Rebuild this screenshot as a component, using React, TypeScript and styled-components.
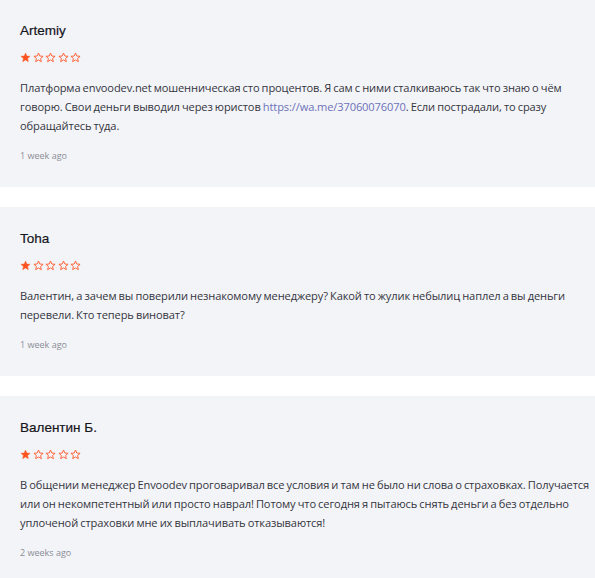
import { FC } from "react";
import styled, { createGlobalStyle } from "styled-components";

const GlobalStyle = createGlobalStyle`
  html, body {
    margin: 0;
    padding: 0;
    background: #ffffff;
  }
  * {
    box-sizing: border-box;
  }
`;

const List = styled.div`
  display: flex;
  flex-direction: column;
  gap: 20px;
  margin-top: -1px;
`;

const CardRoot = styled.div`
  background: #f3f4f8;
  padding: 24px 0 24px 20px;
  display: flex;
  flex-direction: column;
`;

const Name = styled.div`
  font-family: "Liberation Sans", Arial, sans-serif;
  font-size: 13.5px;
  font-weight: 400;
  -webkit-text-stroke: 0.2px #15151c;
  color: #15151c;
  line-height: 16px;
`;

const Stars = styled.div`
  display: flex;
  gap: 1.5px;
  margin-top: 13px;
  height: 12px;
`;

const Body = styled.p`
  margin: 14px 0 0;
  font-family: "Open Sans", "Noto Sans", sans-serif;
  font-size: 11.1px;
  line-height: 19px;
  color: #33353d;
  letter-spacing: -0.12px;
  word-spacing: -0.6px;
`;

const Link = styled.a`
  color: #6d72b8;
  text-decoration: none;
`;

const Time = styled.div`
  margin-top: 14px;
  font-family: "Open Sans", "Noto Sans", sans-serif;
  font-size: 9px;
  line-height: 14px;
  color: #8a8c94;
`;

const Star: FC<{ filled?: boolean }> = ({ filled }) => (
  <svg width="11" height="11" viewBox="0 0 24 24">
    <path
      d="M12 2.2l2.9 6.6 7.1.6-5.4 4.7 1.6 7-6.2-3.7-6.2 3.7 1.6-7L2 9.4l7.1-.6z"
      fill={filled ? "#ff5221" : "none"}
      stroke="#ff5a2c"
      strokeWidth={filled ? 1 : 2}
      strokeLinejoin="round"
    />
  </svg>
);

interface ReviewProps {
  name: string;
  rating: number;
  time: string;
  children: React.ReactNode;
}

const Review: FC<ReviewProps> = ({ name, rating, time, children }) => (
  <CardRoot>
    <Name>{name}</Name>
    <Stars>
      {[0, 1, 2, 3, 4].map((i) => (
        <Star key={i} filled={i < rating} />
      ))}
    </Stars>
    <Body>{children}</Body>
    <Time>{time}</Time>
  </CardRoot>
);

export default function App() {
  return (
    <>
      <GlobalStyle />
      <List>
        <Review name="Artemiy" rating={1} time="1 week ago">
          Платформа envoodev.net мошенническая сто процентов. Я сам с ними
          сталкиваюсь так что знаю о чём говорю. Свои деньги выводил через
          юристов <Link href="#">https://wa.me/37060076070</Link>. Если
          пострадали, то сразу обращайтесь туда.
        </Review>
        <Review name="Toha" rating={1} time="1 week ago">
          Валентин, а зачем вы поверили незнакомому менеджеру? Какой то жулик
          небылиц наплел а вы деньги перевели. Кто теперь виноват?
        </Review>
        <Review name="Валентин Б." rating={1} time="2 weeks ago">
          В общении менеджер Envoodev проговаривал все условия и там не было ни
          слова о страховках. Получается или он некомпетентный или просто
          наврал! Потому что сегодня я пытаюсь снять деньги а без отдельно
          уплоченой страховки мне их выплачивать отказываются!
        </Review>
      </List>
    </>
  );
}
